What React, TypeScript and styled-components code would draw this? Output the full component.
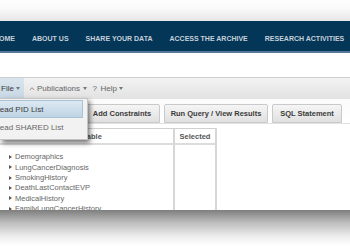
import React from "react";
import styled, { createGlobalStyle } from "styled-components";

const Global = createGlobalStyle`
  html, body { margin: 0; padding: 0; background: #fff; overflow: hidden; }
  body { width: 350px; height: 252px; font-family: "Liberation Sans", Arial, sans-serif; }
`;

const Page = styled.div`
  width: 350px;
  height: 252px;
  display: flex;
  flex-direction: column;
  overflow: hidden;
`;

const Card = styled.div`
  height: 210px;
  flex: none;
  display: flex;
  flex-direction: column;
  background: #fff;
  position: relative;
  overflow: hidden;
`;

const BottomShade = styled.div`
  flex: 1;
  background: linear-gradient(#7e7e7e, #bdbdbd 30%, #ececec 62%, #fff 85%);
`;

const TopShade = styled.div`
  height: 21px;
  flex: none;
  background: linear-gradient(#fefefe, #fafafa 40%, #e6e6e6);
`;

const NavBar = styled.nav`
  height: 26px;
  flex: none;
  background: #033657;
  border-bottom: 2px solid #55789a;
  display: flex;
  align-items: center;
  gap: 17px;
  padding: 4px 0 0;
  margin-left: -6px;
`;

const NavItem = styled.span`
  font-weight: bold;
  font-size: 7px;
  color: #c6d0da;
  white-space: nowrap;
`;

const Gap = styled.div`
  height: 24px;
  flex: none;
`;

const Toolbar = styled.div`
  height: 21px;
  flex: none;
  border-top: 1px solid #cfcfcf;
  background: linear-gradient(#f3f3f3, #e2e2e2);
  display: flex;
  align-items: stretch;
  position: relative;
`;

const MenuButton = styled.div<{ $active?: boolean }>`
  display: flex;
  align-items: center;
  gap: 1.5px;
  padding: 0 ${(p) => (p.$active ? "4px" : "3px")};
  margin-left: ${(p) => (p.$active ? "-3px" : "0")};
  font-size: 8px;
  color: ${(p) => (p.$active ? "#3a3a3a" : "#666")};
  background: ${(p) => (p.$active ? "linear-gradient(#d9e5ee, #c7d7e4)" : "transparent")};
  white-space: nowrap;
`;

const Caret = styled.span`
  width: 0;
  height: 0;
  border-left: 2.5px solid transparent;
  border-right: 2.5px solid transparent;
  border-top: 3px solid #777;
  margin-left: 1px;
`;

const Dropdown = styled.div`
  position: absolute;
  left: 0;
  top: 20px;
  width: 87px;
  padding: 1px 0 3px;
  background: #f2f2f2;
  border: 1px solid #c4c4c4;
  border-left: none;
  box-shadow: 2px 3px 5px rgba(0, 0, 0, 0.55);
  z-index: 5;
  display: flex;
  flex-direction: column;
`;

const DropItem = styled.div<{ $hover?: boolean }>`
  height: 16px;
  margin-right: 4px;
  display: flex;
  align-items: center;
  text-indent: -6px;
  font-size: 8px;
  color: ${(p) => (p.$hover ? "#3a3a3a" : "#666")};
  background: ${(p) => (p.$hover ? "linear-gradient(#dce8f1, #bfd4e4)" : "transparent")};
  border: 1px solid ${(p) => (p.$hover ? "#a9c3d6" : "transparent")};
  border-left: none;
  white-space: nowrap;
  overflow: hidden;
`;

const TabsRow = styled.div`
  height: 24px;
  flex: none;
  display: flex;
  align-items: flex-end;
  gap: 4px;
  padding-left: 84px;
  background: linear-gradient(#fbfbfb, #fff);
  border-bottom: 1px solid #e2e2e2;
`;

const Tab = styled.div<{ $w: number }>`
  width: ${(p) => p.$w}px;
  height: 19px;
  box-sizing: border-box;
  border: 1px solid #c9c9c9;
  border-radius: 2px 2px 0 0;
  background: linear-gradient(#f5f5f5, #e0e0e0);
  display: flex;
  align-items: center;
  justify-content: center;
  font-size: 7.5px;
  font-weight: bold;
  color: #3a3a3a;
  white-space: nowrap;
`;

const TableWrap = styled.div`
  margin: 4px 0 0 -2px;
  width: 217px;
  display: grid;
  grid-template-columns: 177px 1fr;
  grid-template-rows: 16px 1fr;
  flex: 1;
  border-top: 1px solid #d0d0d0;
  border-right: 2px solid #d6d6d6;
`;

const HeadCell = styled.div<{ $last?: boolean }>`
  display: flex;
  align-items: center;
  justify-content: center;
  padding-top: 1px;
  font-size: 7.5px;
  font-weight: bold;
  color: #555;
  border-bottom: 2px solid #dcdcdc;
  border-right: ${(p) => (p.$last ? "none" : "2px solid #d6d6d6")};
`;

const BodyCell = styled.div<{ $last?: boolean }>`
  border-right: ${(p) => (p.$last ? "none" : "2px solid #d6d6d6")};
  padding: 7px 0 0 9px;
  display: flex;
  flex-direction: column;
`;

const TreeItem = styled.div`
  height: 10.3px;
  display: flex;
  align-items: center;
  gap: 3px;
  font-size: 7.5px;
  color: #666;
  white-space: nowrap;
  line-height: 1;
`;

const Arrow = styled.span`
  width: 0;
  height: 0;
  border-top: 2px solid transparent;
  border-bottom: 2px solid transparent;
  border-left: 3px solid #555;
  margin-left: 2px;
`;

const IconBox = styled.svg`
  margin-left: 2px;
`;

const UpIcon = () => (
  <IconBox width="6" height="5" viewBox="0 0 6 5">
    <path d="M1 4 L3 1.6 L5 4" fill="none" stroke="#888" strokeWidth="0.9" />
  </IconBox>
);

const Qmark = styled.span`
  font-size: 8px;
  color: #666;
  margin-right: 2px;
`;

const navItems = ["HOME", "ABOUT US", "SHARE YOUR DATA", "ACCESS THE ARCHIVE", "RESEARCH ACTIVITIES"];
const tree = [
  "Demographics",
  "LungCancerDiagnosis",
  "SmokingHistory",
  "DeathLastContactEVP",
  "MedicalHistory",
  "FamilyLungCancerHistory",
];

export default function App() {
  return (
    <Page>
      <Global />
      <Card>
        <TopShade />
        <NavBar>
          {navItems.map((n) => (
            <NavItem key={n}>{n}</NavItem>
          ))}
        </NavBar>
        <Gap />
        <Toolbar>
          <MenuButton $active>
            File<Caret />
          </MenuButton>
          <MenuButton>
            <UpIcon />
            Publications<Caret />
          </MenuButton>
          <MenuButton>
            <Qmark>?</Qmark>Help<Caret />
          </MenuButton>
          <Dropdown>
            <DropItem $hover>Read PID List</DropItem>
            <DropItem>Read SHARED List</DropItem>
          </Dropdown>
        </Toolbar>
        <TabsRow>
          <Tab $w={76}>Add Constraints</Tab>
          <Tab $w={104}>Run Query / View Results</Tab>
          <Tab $w={70}>SQL Statement</Tab>
        </TabsRow>
        <TableWrap>
          <HeadCell>Available</HeadCell>
          <HeadCell $last>Selected</HeadCell>
          <BodyCell>
            {tree.map((t) => (
              <TreeItem key={t}>
                <Arrow />
                {t}
              </TreeItem>
            ))}
          </BodyCell>
          <BodyCell $last />
        </TableWrap>
      </Card>
      <BottomShade />
    </Page>
  );
}
